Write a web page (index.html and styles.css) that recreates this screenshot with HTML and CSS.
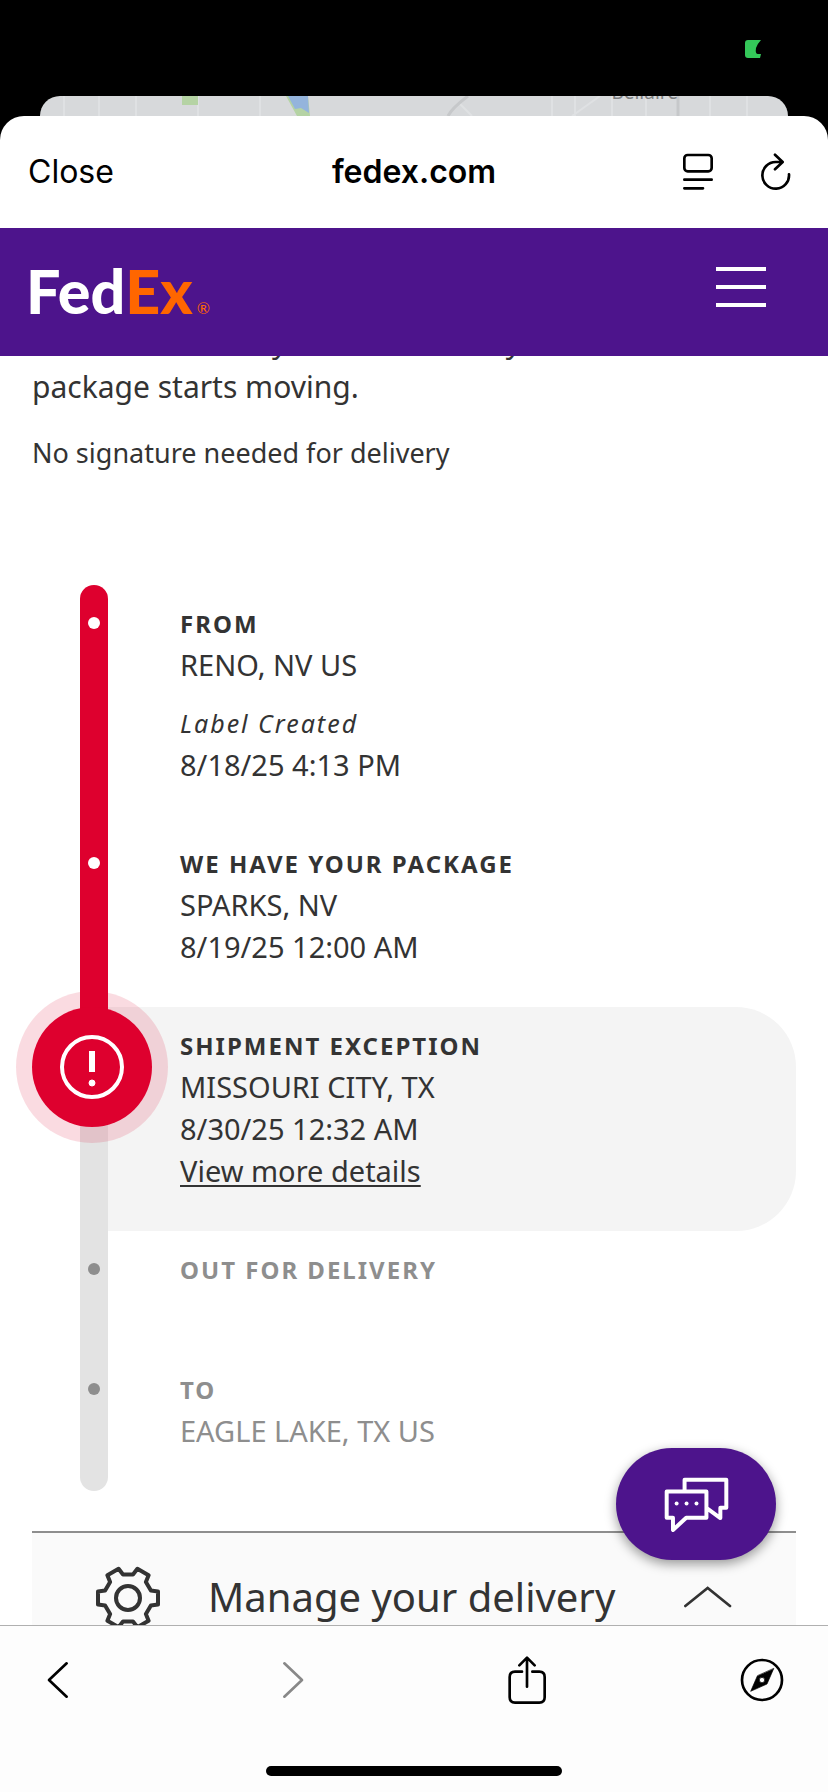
FILE: index.html
```
<!DOCTYPE html>
<html lang="en">
<head>
    <meta charset="UTF-8">
    <meta name="viewport" content="width=device-width, initial-scale=1.0">
    <title>FedEx Tracking</title>
    <link rel="stylesheet" href="styles.css">
</head>
<body>

    <div class="status-bar">
        <svg class="battery" viewBox="0 0 16 18"><path d="M3 0h13q-3 3-5 8-1 6 2 6h3l-1 4H3q-3 0-3-3V3q0-3 3-3z"></path></svg>
    </div>

    <!-- Map page sitting behind the sheet -->
    <div class="map-peek">
        <svg viewBox="0 0 748 20" preserveAspectRatio="xMidYMin slice">
            <path class="road" d="M24 0v20M59 0v20M96 0v20M158 0v20M220 0v20M512 0v20M535 0v20M572 0v20M606 0v20M670 0v20M707 0v20M560 0l-28 20M420 8l12 12"></path>
            <path class="road-dark" d="M428 0Q412 12 408 20M638 0v20"></path>
            <path class="park" d="M142 0h16v9h-16zM246 0h22l2 20h-13z"></path>
            <path class="water" d="M248 0h20l1 17-8-5-6 1z"></path>
        </svg>
        <span class="map-label">Bellaire</span>
    </div>

    <div class="sheet">
        <header class="sheet-bar">
            <button class="close">Close</button>
            <div class="sheet-title">fedex.com</div>
            <div class="sheet-actions">
                <button aria-label="Reader">
                    <svg class="icon reader" viewBox="126 70 93 114"><rect x="130" y="76" width="82" height="49" rx="10"></rect><path d="M130 150h82M130 176h56"></path></svg>
                </button>
                <button aria-label="Reload">
                    <svg class="icon reload" viewBox="357 70 93 114"><path d="M444 134A40 40 0 1 1 404 97H424M402 75l23 22-23 22"></path></svg>
                </button>
            </div>
        </header>

        <nav class="site-nav">
            <a class="logo" href="#" aria-label="FedEx">
                <span class="logo-fed">Fed</span><span class="logo-ex">Ex</span><span class="logo-mark">®</span>
            </a>
            <button class="menu" aria-label="Menu"><span></span><span></span><span></span></button>
        </nav>

        <main class="page">
            <div class="content">
                <div class="intro">
                    <p class="lead">We can estimate your new delivery date once the<br>package starts moving.</p>
                    <p class="signature">No signature needed for delivery</p>
                </div>

                <ol class="timeline">
                    <li class="step done">
                        <div class="rail"><span class="dot"></span></div>
                        <div class="details">
                            <h2>FROM</h2>
                            <p>RENO, NV US</p>
                            <p class="event">Label Created</p>
                            <p>8/18/25 4:13 PM</p>
                        </div>
                    </li>
                    <li class="step done">
                        <div class="rail"><span class="dot"></span></div>
                        <div class="details">
                            <h2>WE HAVE YOUR PACKAGE</h2>
                            <p>SPARKS, NV</p>
                            <p>8/19/25 12:00 AM</p>
                        </div>
                    </li>
                    <li class="step current">
                        <div class="rail">
                            <span class="alert">
                                <svg viewBox="0 0 64 64"><circle cx="32" cy="32" r="30"></circle><path d="M32 16v21"></path><circle class="point" cx="32" cy="48" r="3"></circle></svg>
                            </span>
                        </div>
                        <div class="details">
                            <h2>SHIPMENT EXCEPTION</h2>
                            <p>MISSOURI CITY, TX</p>
                            <p>8/30/25 12:32 AM</p>
                            <a href="#">View more details</a>
                        </div>
                    </li>
                    <li class="step pending">
                        <div class="rail"><span class="dot"></span></div>
                        <div class="details">
                            <h2>OUT FOR DELIVERY</h2>
                        </div>
                    </li>
                    <li class="step pending">
                        <div class="rail"><span class="dot"></span></div>
                        <div class="details">
                            <h2>TO</h2>
                            <p>EAGLE LAKE, TX US</p>
                        </div>
                    </li>
                </ol>

                <button class="manage">
                    <svg class="gear" viewBox="-32 -32 64 64"><path d="M-5-23.500H5L9.400-29.200 20.600-22.700 17.900-16.100 22.900-7.400 30-6.500V6.500L22.900 7.400 17.900 16.100 20.600 22.700 9.400 29.200 5 23.500H-5L-9.400 29.200-20.600 22.700-17.900 16.100-22.900 7.400-30 6.500V-6.500L-22.900-7.400-17.900-16.100-20.600-22.700-9.400-29.200Z"></path><circle r="12"></circle></svg>
                    <span class="manage-title">Manage your delivery</span>
                    <svg class="chevron" viewBox="313 498 144 66"><path d="M317 558l67-54 67 54"></path></svg>
                </button>
            </div>

            <button class="chat" aria-label="Chat">
                <svg viewBox="250 172 196 166"><path d="M258 216H378V295H317L277 332V295H258ZM312 216V180H438V265H420V296L380 267"></path><circle cx="288" cy="252" r="6"></circle><circle cx="318" cy="252" r="6"></circle><circle cx="348" cy="252" r="6"></circle></svg>
            </button>
        </main>

        <footer class="toolbar">
            <div class="toolbar-buttons">
                <button aria-label="Back">
                    <svg class="icon arrow" viewBox="79 63 66 114"><path d="M138 70L85 120l53 50"></path></svg>
                </button>
                <button aria-label="Forward" disabled>
                    <svg class="icon arrow" viewBox="795 63 66 114"><path d="M802 70l53 50-53 50"></path></svg>
                </button>
                <button aria-label="Share">
                    <svg class="icon share" viewBox="86 44 114 147"><path d="M128 91H107q-16 0-16 16v61q0 16 16 16h73q16 0 16-16v-61q0-16-16-16H159M143 50v86M120 72l23-23 23 23"></path></svg>
                </button>
                <button aria-label="Open in browser">
                    <svg class="icon compass" viewBox="779 55 132 132"><circle cx="845" cy="121" r="60"></circle><path fill-rule="evenodd" d="M880 87L860 133 811 155 831 109ZM845 113a8 8 0 1 0 0 16 8 8 0 0 0 0-16z"></path></svg>
                </button>
            </div>
            <div class="home-indicator"></div>
        </footer>
    </div>

</body>
</html>
```
FILE: styles.css
```
:root {
    --purple: #4d148c;
    --orange: #ff6600;
    --red: #de002e;
    --text-color: #333333;
    --muted-color: #8e8e8e;
    --rail-color: #e3e3e3;
    --card-color: #f4f4f4;
    --font-main: 'Noto Sans', sans-serif;
    --font-system: 'Inter', sans-serif;
}

* {
    box-sizing: border-box;
}

body {
    margin: 0;
    height: 100vh;
    display: flex;
    flex-direction: column;
    background-color: #000;
    color: var(--text-color);
    font-family: var(--font-main);
    font-size: 29px;
    line-height: 42px;
}

button {
    padding: 0;
    border: 0;
    background: none;
    color: inherit;
    font: inherit;
    cursor: pointer;
}

svg {
    display: block;
}

h2, p {
    margin: 0;
}

/* Status bar and the page behind */
.status-bar {
    height: 96px;
    padding: 40px 67px 0 0;
    display: flex;
    justify-content: flex-end;
}

.battery {
    width: 16px;
    height: 18px;
    fill: #34c759;
}

.map-peek {
    position: relative;
    height: 20px;
    margin: 0 40px;
    border-radius: 20px 20px 0 0;
    background-color: #d7d9db;
    overflow: hidden;
}

.map-peek svg {
    width: 100%;
    height: 20px;
    fill: none;
}

.road {
    stroke: #dfe1e3;
    stroke-width: 2;
}

.road-dark {
    stroke: #c6c8ca;
    stroke-width: 3;
}

.park {
    fill: #b5d3a4;
}

.water {
    fill: #94b4dc;
}

.map-label {
    position: absolute;
    right: 110px;
    bottom: 14px;
    color: #7c7e80;
    font-size: 19px;
    line-height: 20px;
}

/* Sheet */
.sheet {
    flex: 1;
    min-height: 0;
    display: flex;
    flex-direction: column;
    background-color: #fff;
    border-radius: 24px 24px 0 0;
    overflow: hidden;
}

.sheet-bar {
    height: 112px;
    padding: 0 28px;
    display: grid;
    grid-template-columns: 1fr auto 1fr;
    align-items: center;
    color: #000;
    font-family: var(--font-system);
    font-size: 32px;
}

.close {
    justify-self: start;
}

.sheet-title {
    font-weight: 600;
}

.sheet-actions {
    padding-right: 9px;
    display: flex;
    justify-content: flex-end;
    gap: 46px;
}

.icon {
    fill: none;
    stroke: currentColor;
    stroke-width: 8;
    stroke-linecap: round;
    stroke-linejoin: round;
}

.reader, .reload {
    width: 31px;
    height: 38px;
}

.site-nav {
    height: 128px;
    padding: 0 62px 10px 26px;
    display: flex;
    justify-content: space-between;
    align-items: center;
    background-color: var(--purple);
}

.logo {
    padding-top: 24px;
    display: flex;
    align-items: baseline;
    color: #fff;
    font-family: 'Lato', sans-serif;
    font-size: 61px;
    font-weight: 900;
    line-height: 64px;
    text-decoration: none;
}

.logo-ex, .logo-mark {
    color: var(--orange);
}

.logo-mark {
    margin-left: 4px;
    font-size: 16px;
    font-weight: 400;
}

.menu {
    width: 50px;
    display: flex;
    flex-direction: column;
    gap: 14px;
}

.menu span {
    height: 4px;
    background-color: #fff;
}

/* Tracking page */
.page {
    position: relative;
    flex: 1;
    min-height: 0;
}

.content {
    height: 100%;
    padding: 0 32px;
    display: flex;
    flex-direction: column;
    justify-content: flex-end;
    overflow: hidden;
}

/* The page is scrolled, so the first line runs under the nav */
.intro {
    flex: 1;
    min-height: 0;
    display: flex;
    flex-direction: column;
    justify-content: flex-end;
    padding-bottom: 111px;
}

.lead {
    font-size: 30px;
    line-height: 45px;
}

.signature {
    margin-top: 23px;
    font-size: 27px;
}

/* Timeline */
.timeline {
    margin: 0 0 40px;
    padding: 0 0 0 48px;
    list-style: none;
}

.step {
    display: grid;
    grid-template-columns: 28px 1fr;
}

.rail {
    position: relative;
    padding-top: 32px;
    background-color: var(--rail-color);
}

.done .rail {
    z-index: 2;
    background-color: var(--red);
}

.current .rail {
    background-image: linear-gradient(var(--red) 60px, transparent 60px);
}

.step:first-child .rail {
    border-radius: 14px 14px 0 0;
}

.step:last-child .rail {
    border-radius: 0 0 14px 14px;
}

.dot {
    display: block;
    width: 12px;
    height: 12px;
    margin: 0 auto;
    border-radius: 50%;
    background-color: var(--muted-color);
}

.done .dot {
    background-color: #fff;
}

.details {
    padding: 19px 0 39px 72px;
}

.details h2 {
    font-size: 24px;
    line-height: 40px;
    font-weight: 700;
    letter-spacing: 2px;
}

.details a {
    color: inherit;
    text-underline-offset: 3px;
}

.details .event {
    margin-top: 16px;
    font-size: 25px;
    font-style: italic;
    letter-spacing: 2px;
}

.current .details {
    background-color: var(--card-color);
    border-radius: 0 60px 60px 0;
}

.pending {
    min-height: 120px;
    color: var(--muted-color);
}

.alert {
    position: absolute;
    z-index: 1;
    top: 0;
    left: -48px;
    width: 120px;
    height: 120px;
    display: flex;
    align-items: center;
    justify-content: center;
    border-radius: 50%;
    background-color: var(--red);
    box-shadow: 0 0 0 16px rgba(222, 0, 46, 0.14);
}

.alert svg {
    width: 64px;
    height: 64px;
    fill: none;
    stroke: #fff;
    stroke-width: 4;
}

.alert path {
    stroke-width: 6;
}

.alert .point {
    fill: #fff;
    stroke-width: 1;
}

/* Manage delivery */
.manage {
    flex: none;
    height: 94px;
    padding: 33px 64px 0;
    display: flex;
    align-items: flex-start;
    border-top: 2px solid var(--muted-color);
    background-color: #fafafa;
    text-align: left;
}

.gear {
    flex: none;
    width: 64px;
    height: 64px;
    margin-right: 48px;
    fill: none;
    stroke: currentColor;
    stroke-width: 4;
    stroke-linejoin: round;
}

.manage-title {
    flex: 1;
    font-size: 40px;
    line-height: 62px;
}

.chevron {
    width: 48px;
    height: 22px;
    margin-top: 20px;
    fill: none;
    stroke: currentColor;
    stroke-width: 8;
    stroke-linecap: round;
}

.chat {
    position: absolute;
    z-index: 3;
    right: 52px;
    bottom: 65px;
    width: 160px;
    height: 112px;
    display: flex;
    align-items: center;
    justify-content: center;
    border-radius: 56px;
    background-color: var(--purple);
    box-shadow: 0 4px 12px rgba(0, 0, 0, 0.4);
}

.chat svg {
    width: 65px;
    height: 55px;
    fill: none;
    stroke: #fff;
    stroke-width: 12;
    stroke-linejoin: round;
}

.chat circle {
    fill: #fff;
    stroke: none;
}

/* Bottom toolbar */
.toolbar {
    height: 167px;
    padding-bottom: 16px;
    display: flex;
    flex-direction: column;
    justify-content: space-between;
    align-items: center;
    border-top: 1px solid #b0b0b0;
    background-color: #fdfdfd;
    color: #000;
}

.toolbar-buttons {
    width: 100%;
    padding: 29px 44px 0 36px;
    display: flex;
    justify-content: space-between;
}

.toolbar-buttons button {
    width: 44px;
    height: 50px;
    display: flex;
    align-items: center;
    justify-content: center;
}

.toolbar-buttons button:disabled {
    color: #888;
}

.arrow {
    width: 22px;
    height: 38px;
}

.share {
    width: 38px;
    height: 49px;
}

.compass {
    width: 44px;
    height: 44px;
}

.compass path {
    fill: currentColor;
    stroke-width: 2;
}

.home-indicator {
    width: 296px;
    height: 10px;
    border-radius: 5px;
    background-color: #000;
}
```
